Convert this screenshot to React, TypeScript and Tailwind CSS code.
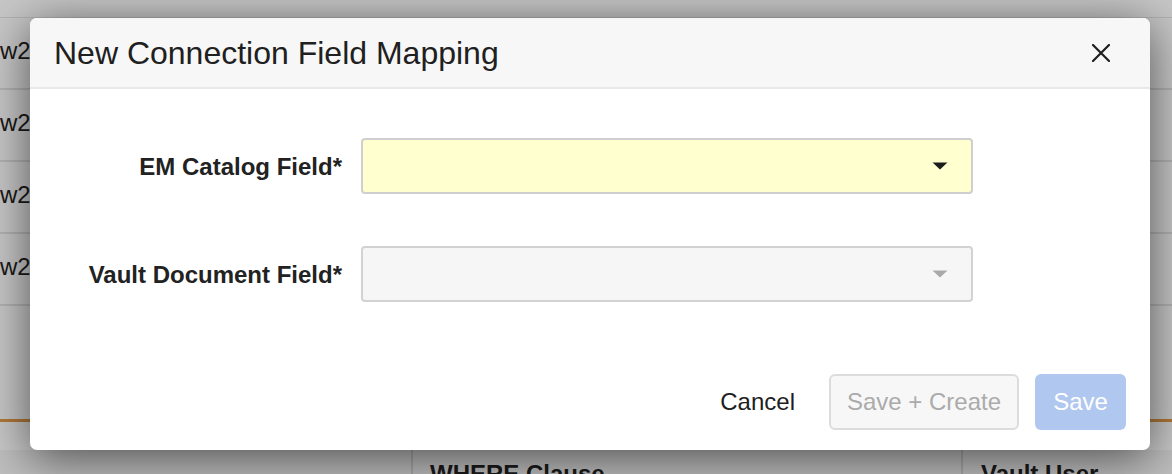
import React from 'react';

const font = { fontFamily: '"Liberation Sans", Arial, Helvetica, sans-serif' };

function Caret({ color }: { color: string }) {
  return (
    <svg width="16" height="8" viewBox="0 0 16 8">
      <path d="M0.5 0.5 H15.5 L8 7.5 Z" fill={color} />
    </svg>
  );
}

function SelectBox({ disabled = false }: { disabled?: boolean }) {
  return (
    <div
      className={`flex items-center justify-end w-[612px] h-[56px] rounded-[4px] border-2 pr-[23px] ${
        disabled ? 'bg-[#f6f6f6] border-[#d2d2d2]' : 'bg-[#ffffd0] border-[#cfcfcf]'
      }`}
    >
      <Caret color={disabled ? '#a9a9a9' : '#1c1c1c'} />
    </div>
  );
}

// Page that sits under the modal
function BackgroundPage() {
  return (
    <div className="w-[1172px] h-[474px] bg-white overflow-hidden text-[24px] text-[#222]">
      <div className="h-[18px] border-b border-[#e4e4e4]" />
      {[0, 1, 2, 3].map((i) => (
        <div key={i} className="h-[72px] flex items-center border-b-2 border-[#e4e4e4]">
          <span className="-mt-[5px]">w2</span>
        </div>
      ))}
      <div className="h-[116px] border-b-[3px] border-[#e29a48]" />
      <div className="h-[28px]" />
      <div className="flex h-[40px] bg-[#f4f4f4]">
        <div className="w-[413px] border-r-2 border-[#d8d8d8]" />
        <div className="w-[550px] pl-[17px] pt-[6px] font-bold border-r-2 border-[#d8d8d8]">WHERE Clause</div>
        <div className="pl-[18px] pt-[6px] font-bold">Vault User</div>
      </div>
    </div>
  );
}

export default function App() {
  return (
    <div className="relative w-[1172px] h-[474px] overflow-hidden" style={font}>
      <BackgroundPage />
      <div className="absolute inset-0 bg-black/[0.22]" />

      {/* Modal */}
      <div className="absolute left-[30px] top-[18px] w-[1120px] h-[432px] bg-white rounded-[7px] shadow-[0_8px_48px_rgba(0,0,0,0.6)] overflow-hidden flex flex-col">
        <div className="h-[71px] shrink-0 bg-[#f7f7f7] border-b-2 border-[#e9e9e9] flex items-center justify-between pl-[24px] pr-[40px]">
          <h2 className="text-[32px] text-[#202020] leading-none mt-[1px]">New Connection Field Mapping</h2>
          <svg width="18" height="18" viewBox="0 0 18 18">
            <path d="M1 1 L17 17 M17 1 L1 17" stroke="#1e1e1e" strokeWidth="2.2" strokeLinecap="round" />
          </svg>
        </div>

        <div className="flex-1 flex flex-col pt-[49px] gap-[52px]">
          <div className="flex items-center gap-[19px]">
            <label className="w-[312px] text-right font-bold text-[24px] text-[#222] mt-[2px]">EM Catalog Field*</label>
            <SelectBox />
          </div>
          <div className="flex items-center gap-[19px]">
            <label className="w-[312px] text-right font-bold text-[24px] text-[#222] mt-[2px]">Vault Document Field*</label>
            <SelectBox disabled />
          </div>
        </div>

        <div className="flex items-center justify-end pr-[24px] pb-[20px]">
          <button className="text-[24px] text-[#1e1e1e] mr-[34px]">Cancel</button>
          <button className="w-[190px] h-[56px] rounded-[6px] border-2 border-[#dcdcdc] bg-[#f7f7f7] text-[24px] text-[#ababab] mr-[16px]">
            Save + Create
          </button>
          <button className="w-[91px] h-[56px] rounded-[6px] bg-[#b0c7ef] text-[24px] text-white">Save</button>
        </div>
      </div>
    </div>
  );
}
